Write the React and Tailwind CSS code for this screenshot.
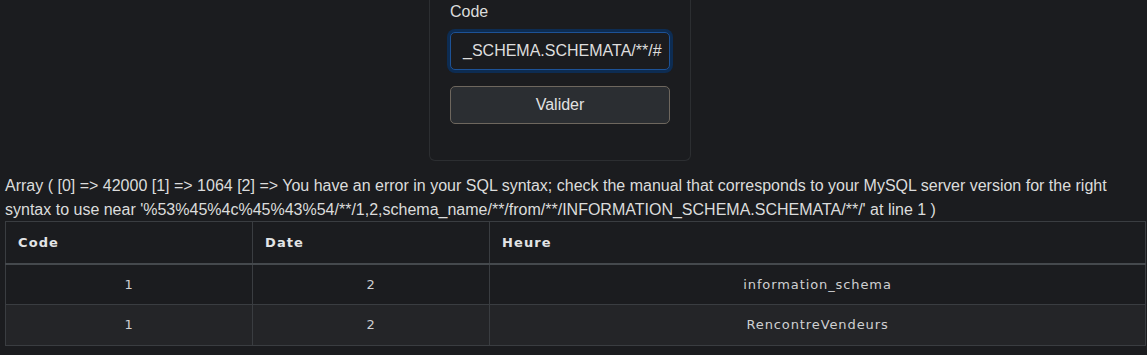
import React from "react";

export default function App() {
  const rows = [
    ["1", "2", "information_schema"],
    ["1", "2", "RencontreVendeurs"],
  ];
  return (
    <div className="min-h-[355px] bg-[#1b1c1f] font-['Liberation_Sans',Arial,sans-serif] text-[#dcdcdc] overflow-hidden">
      <div className="ml-[429px] w-[262px] rounded-b-[6px] border border-t-0 border-[#2c2e31] px-[20px] pb-[36px]">
        <label className="block text-[16px] leading-[24px] mb-[8px] text-[#dcdcdc]">Code</label>
        <div className="h-[38px] rounded-[5px] border border-[#1d5296] ring-[3px] ring-[#0d2c52] px-[12px] flex items-center overflow-hidden whitespace-nowrap text-[16px] text-[#dedede] bg-[#1b1c1f]">
          _SCHEMA.SCHEMATA/**/#
        </div>
        <button className="mt-[16px] w-full h-[38px] rounded-[5px] border border-[#6e675e] bg-[#2b2e32] text-[16px] text-[#e2e2e2]">
          Valider
        </button>
      </div>
      <p className="mt-[13px] px-[5px] text-[16px] leading-[24px] text-[#dcdcdc]">
        Array ( [0] =&gt; 42000 [1] =&gt; 1064 [2] =&gt; You have an error in your SQL syntax; check the manual that corresponds to your MySQL server version for the right syntax to use near '%53%45%4c%45%43%54/**/1,2,schema_name/**/from/**/INFORMATION_SCHEMA.SCHEMATA/**/' at line 1 )
      </p>
      <div className="px-[5px] -mt-[1px]">
        <table className="w-[1140px] table-fixed border-collapse font-['DejaVu_Sans',sans-serif] text-[13px]">
          <colgroup>
            <col className="w-[247px]" />
            <col className="w-[237px]" />
            <col className="w-[656px]" />
          </colgroup>
          <thead>
            <tr className="h-[42px]">
              {["Code", "Date", "Heure"].map((h) => (
                <th
                  key={h}
                  className="border border-[#3a3d41] border-b-2 border-b-[#45494d] text-left pl-[12px] font-bold tracking-[1.1px] text-[#e2e4e6]"
                >
                  {h}
                </th>
              ))}
            </tr>
          </thead>
          <tbody>
            {rows.map((r, i) => (
              <tr key={i} className={`h-[41px] ${i === 1 ? "bg-[#242528]" : ""}`}>
                {r.map((c, j) => (
                  <td
                    key={j}
                    className="border border-[#3a3d41] text-center tracking-[0.9px] text-[#cfd0d2]"
                  >
                    {c}
                  </td>
                ))}
              </tr>
            ))}
          </tbody>
        </table>
      </div>
    </div>
  );
}
